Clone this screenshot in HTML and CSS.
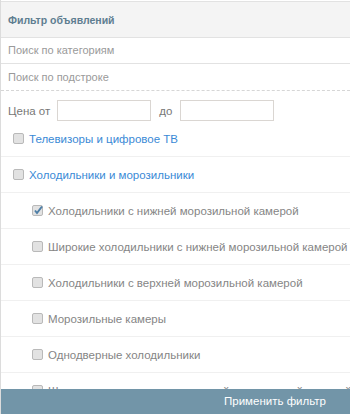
FILE: index.html
```html
<html>
<head>
  <meta charset="UTF-8">
  <title>Фильтр объявлений</title>
  <link rel="stylesheet" href="styles.css">
</head>
<body>
<div class="filter">
  <div class="header"><p>Фильтр объявлений</p></div>
  <div class="search">Поиск по категориям</div>
  <div class="search dashed">Поиск по подстроке</div>
  <div class="price">
    <span>Цена от</span>
    <span class="input"></span>
    <span class="to">до</span>
    <span class="input"></span>
  </div>
  <div class="list">
    <div class="item top"><span class="box"></span><a href="javascript:">Телевизоры и цифровое ТВ</a></div>
    <div class="item top"><span class="box"></span><a href="javascript:">Холодильники и морозильники</a></div>
    <div class="item sub"><span class="box checked"><svg width="10" height="10" viewBox="0 0 10 10"><path d="M2 5.5 L4 8 L9 1.5" fill="none" stroke="#4d7ea6" stroke-width="2"/></svg></span>Холодильники с нижней морозильной камерой</div>
    <div class="item sub"><span class="box"></span>Широкие холодильники с нижней морозильной камерой</div>
    <div class="item sub"><span class="box"></span>Холодильники с верхней морозильной камерой</div>
    <div class="item sub"><span class="box"></span>Морозильные камеры</div>
    <div class="item sub"><span class="box"></span>Однодверные холодильники</div>
    <div class="item sub"><span class="box"></span>Широкие холодильники с верхней морозильной камерой</div>
  </div>
  <div class="apply">Применить фильтр</div>
</div>
</body>
</html>
```
FILE: styles.css
```css
body {
  margin: 0;
  font-family: "Liberation Sans", Arial, sans-serif;
  overflow: hidden
}

.filter {
  height: 414px;
  display: flex;
  flex-direction: column;
  border-left: 1px solid #dcdcdc;
  box-sizing: border-box;
  padding-top: 1px
}

.header {
  height: 35px;
  background-color: #f4f4f4;
  border-top: 1px solid #e2e2e2;
  border-bottom: 1px solid #e2e2e2;
  display: flex;
  align-items: center;
  flex-shrink: 0
}

.header p {
  margin: 0 0 0 7px;
  font-size: 10.5px;
  font-weight: bold;
  color: #5f7e91
}

.search {
  height: 25px;
  line-height: 25px;
  padding-left: 7px;
  font-size: 11px;
  color: #9a9a9a;
  border-bottom: 1px solid #e2e2e2;
  flex-shrink: 0
}

.search.dashed {
  height: 26px;
  line-height: 26px;
  border-bottom: 1px dashed #d6d6d6
}

.price {
  display: flex;
  align-items: center;
  padding: 9px 0 0 7px;
  font-size: 11.5px;
  color: #777;
  flex-shrink: 0
}

.input {
  width: 92px;
  height: 19px;
  border: 1px solid #dad6d2;
  margin-left: 7px
}

.to {
  margin-left: 8px
}

.to + .input {
  margin-left: 8px
}

.list {
  flex: 1;
  overflow: hidden
}

.item {
  height: 35px;
  display: flex;
  align-items: center;
  white-space: nowrap;
  font-size: 11.5px;
  border-bottom: 1px solid #f0f0f0
}

.item.top {
  padding-left: 12px
}

.item.sub {
  padding-left: 31px;
  color: #858585
}

.item a {
  color: #3a8ad6;
  text-decoration: none
}

.box {
  width: 9px;
  height: 9px;
  border: 1px solid #b9b9b9;
  border-radius: 2px;
  background-color: #e2e2e2;
  background-image: radial-gradient(#c8c8c8 30%, transparent 35%);
  background-size: 2px 2px;
  margin-right: 5px;
  flex-shrink: 0;
  position: relative
}

.box svg {
  position: absolute;
  left: 0;
  top: -1px
}

.apply {
  height: 25px;
  line-height: 25px;
  background-color: #7295a8;
  color: #fff;
  font-size: 11.5px;
  text-align: right;
  padding-right: 24px;
  flex-shrink: 0
}
```
